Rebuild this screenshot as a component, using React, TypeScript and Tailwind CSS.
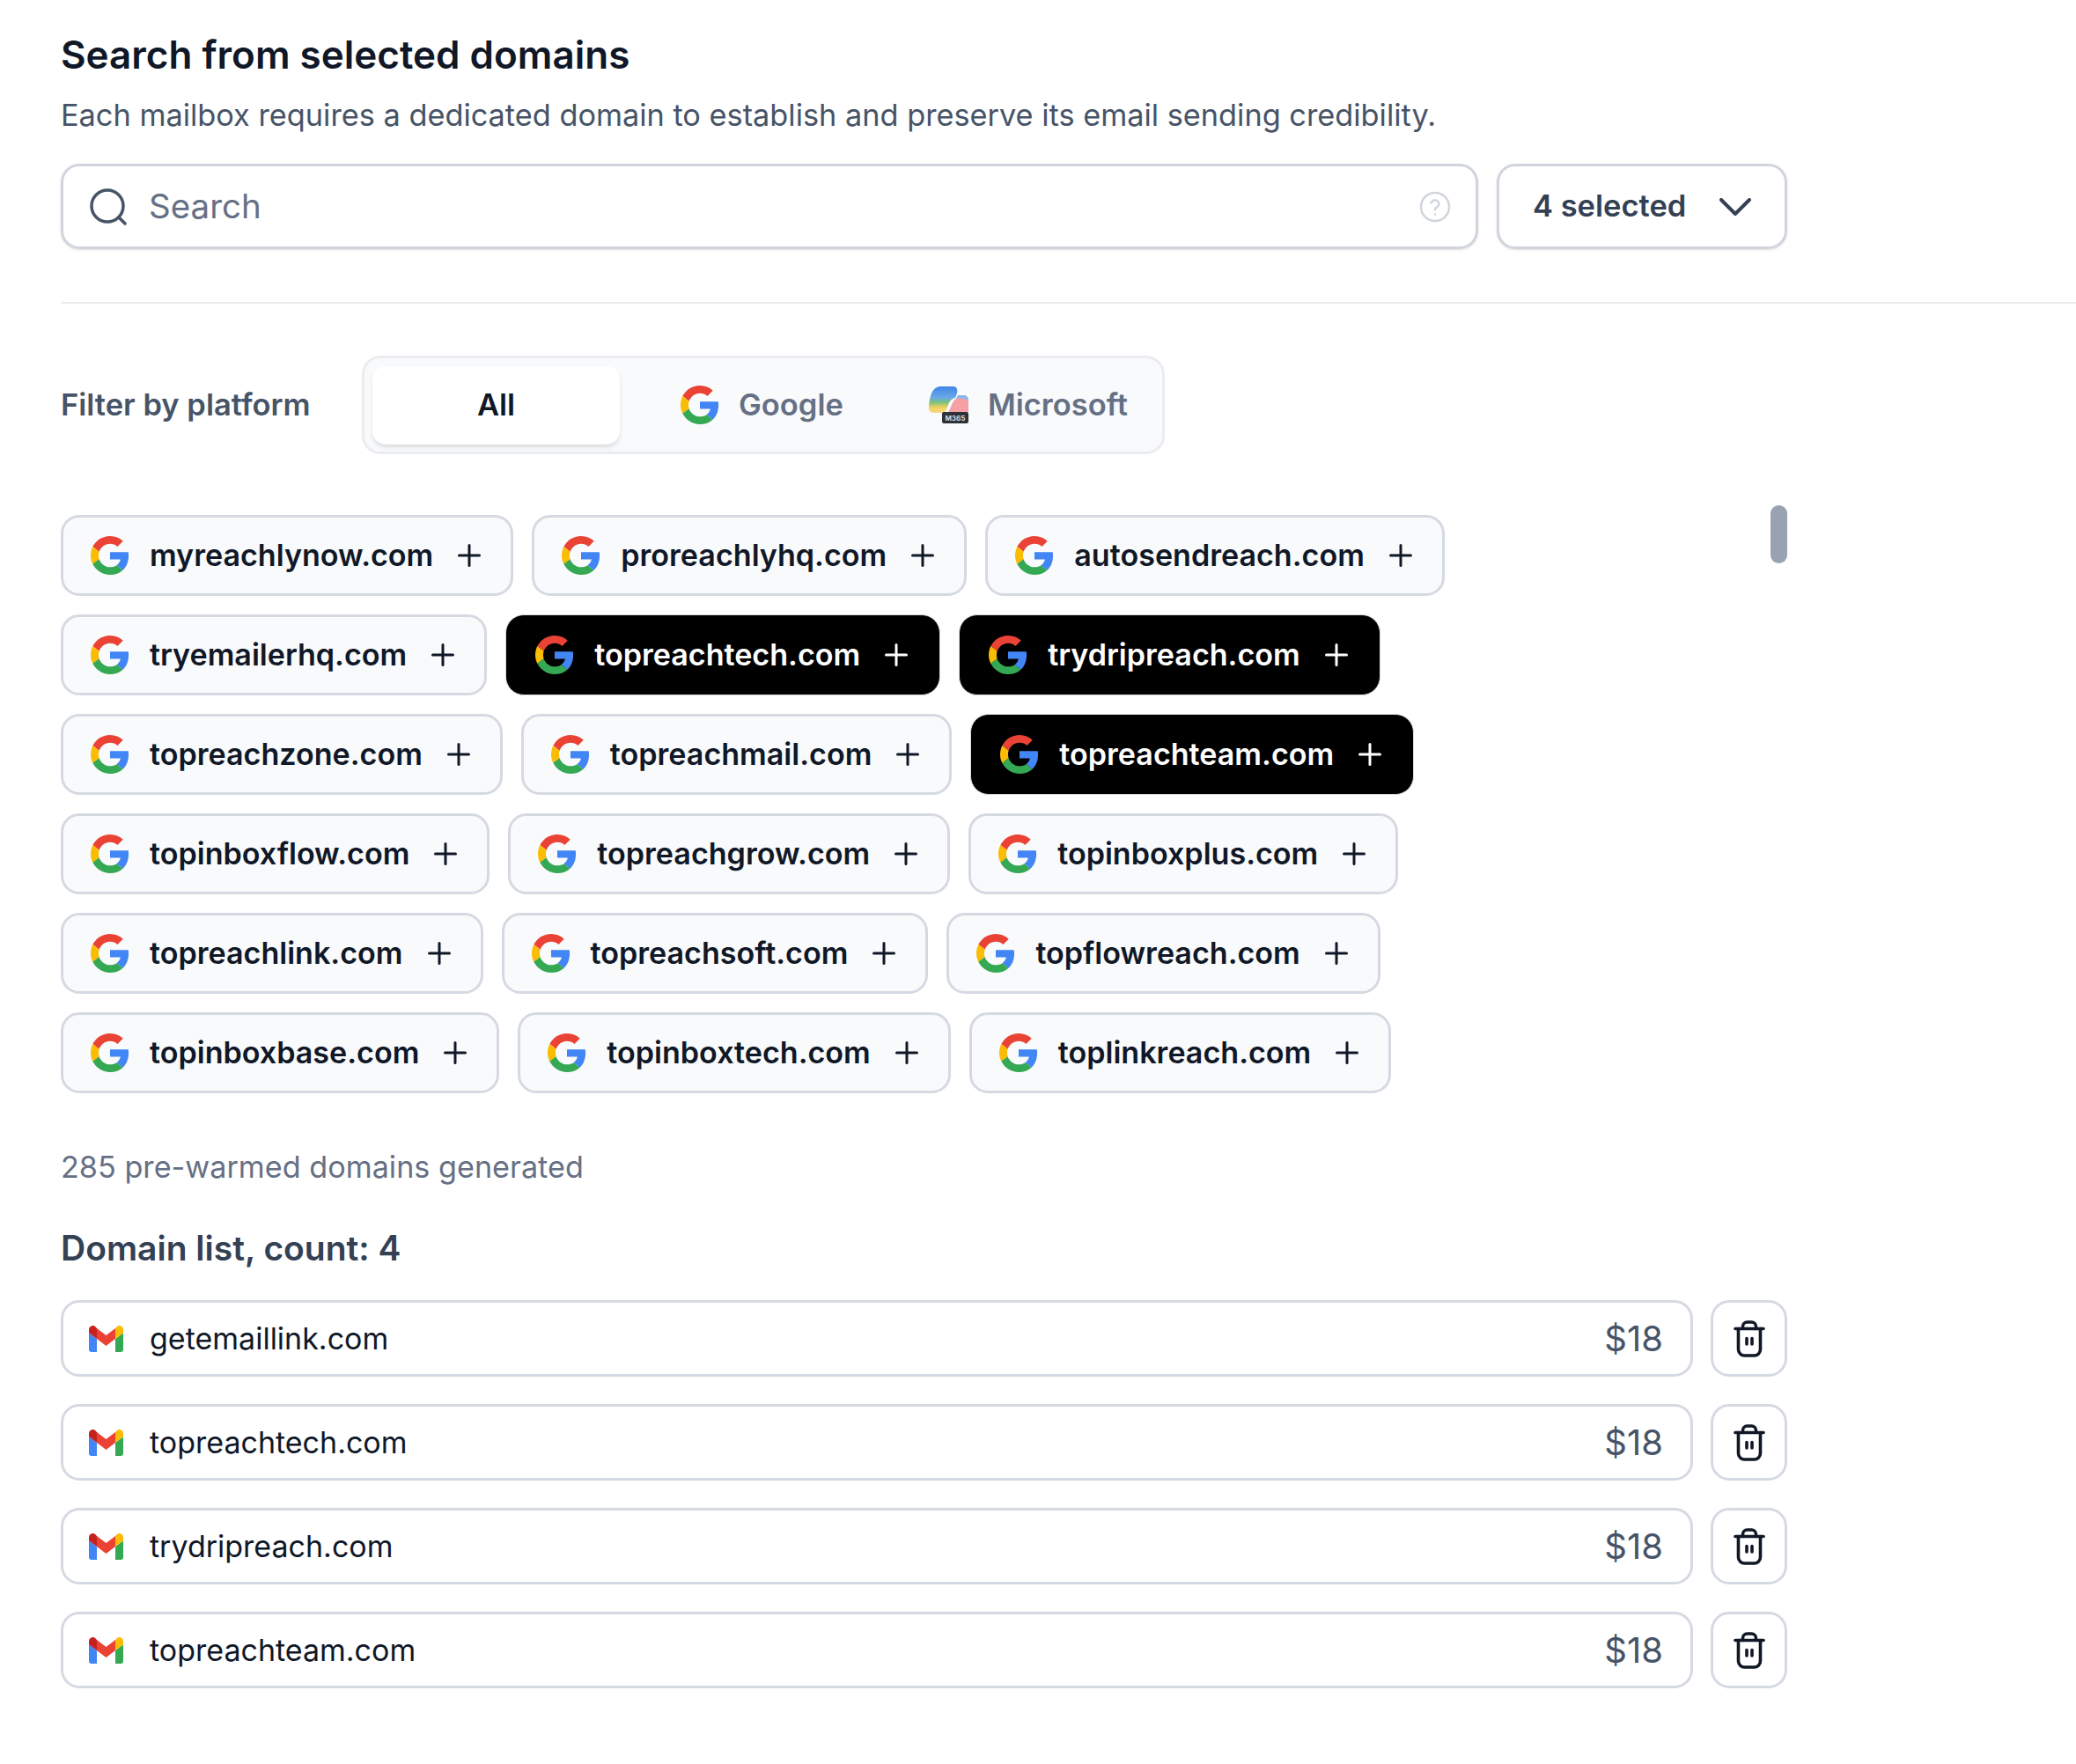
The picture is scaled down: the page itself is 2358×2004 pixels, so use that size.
const rows = [
  [
    { name: "myreachlynow.com" },
    { name: "proreachlyhq.com" },
    { name: "autosendreach.com" },
  ],
  [
    { name: "tryemailerhq.com" },
    { name: "topreachtech.com", selected: true },
    { name: "trydripreach.com", selected: true },
  ],
  [
    { name: "topreachzone.com" },
    { name: "topreachmail.com" },
    { name: "topreachteam.com", selected: true },
  ],
  [
    { name: "topinboxflow.com" },
    { name: "topreachgrow.com" },
    { name: "topinboxplus.com" },
  ],
  [
    { name: "topreachlink.com" },
    { name: "topreachsoft.com" },
    { name: "topflowreach.com" },
  ],
  [
    { name: "topinboxbase.com" },
    { name: "topinboxtech.com" },
    { name: "toplinkreach.com" },
  ],
];

const picked = ["getemaillink.com", "topreachtech.com", "trydripreach.com", "topreachteam.com"];

const GoogleIcon = ({ className }: { className?: string }) => (
  <svg viewBox="0 0 48 48" className={className}>
    <path fill="#EA4335" d="M24 9.5c3.54 0 6.71 1.22 9.21 3.6l6.85-6.85C35.9 2.38 30.47 0 24 0 14.62 0 6.51 5.38 2.56 13.22l7.98 6.19C12.43 13.72 17.74 9.5 24 9.5z" />
    <path fill="#4285F4" d="M46.98 24.55c0-1.57-.15-3.09-.38-4.55H24v9.02h12.94c-.58 2.96-2.26 5.48-4.78 7.18l7.73 6c4.51-4.18 7.09-10.36 7.09-17.65z" />
    <path fill="#FBBC05" d="M10.53 28.59c-.48-1.45-.76-2.99-.76-4.59s.27-3.14.76-4.59l-7.98-6.19C.92 16.46 0 20.12 0 24c0 3.88.92 7.54 2.56 10.78l7.97-6.19z" />
    <path fill="#34A853" d="M24 48c6.48 0 11.93-2.13 15.89-5.81l-7.73-6c-2.15 1.45-4.92 2.3-8.16 2.3-6.26 0-11.57-4.22-13.47-9.91l-7.98 6.19C6.51 42.62 14.62 48 24 48z" />
  </svg>
);

const GmailIcon = () => (
  <svg viewBox="0 0 52 40" className="h-[30px] w-[39px] shrink-0">
    <path fill="#4285F4" d="M4 40h8V20L0 11v25a4 4 0 0 0 4 4z" />
    <path fill="#34A853" d="M40 40h8a4 4 0 0 0 4-4V11L40 20z" />
    <path fill="#FBBC05" d="M40 4v16l12-9V6c0-5-5.5-7.800-9.500-4.800z" />
    <path fill="#EA4335" d="M12 20V4l14 10.500L40 4v16L26 30.500z" />
    <path fill="#C5221F" d="M0 6v5l12 9V4L9.500 1.200C5.500-1.800 0 1 0 6z" />
  </svg>
);

const M365Icon = () => (
  <div className="relative h-[42px] w-[45px] shrink-0">
    <svg viewBox="0 0 45 42" className="h-[42px] w-[45px]">
      <defs>
        <linearGradient id="m365-left" x1="0" y1="0" x2="0" y2="1">
          <stop offset="0" stopColor="#3f86e6" />
          <stop offset="0.42" stopColor="#6aa8e8" />
          <stop offset="0.6" stopColor="#79c27c" />
          <stop offset="0.8" stopColor="#f2d15f" />
          <stop offset="1" stopColor="#f6d98a" />
        </linearGradient>
      </defs>
      <path fill="url(#m365-left)" d="M0 24C1 10 4 0 14 0h14c4 0 5 4 4 8l-2 5c-4 1-6 3-8 8l-4 9H6c-4 0-6-2-6-6z" />
      <path fill="#f4a0a4" d="M33 13l3-3h4c3 0 5 3 5 7v10c0 3-2 3-3 3H22l4-9c2-5 4-7 7-8z" />
      <path fill="#8eb4ee" d="M33 10h7c3 0 5 3 5 6-4-2-9-3-14-2z" />
    </svg>
    <div className="absolute bottom-0 right-0 flex h-[13px] w-[30px] items-center justify-center rounded-[2px] bg-[#2d3138] text-[8px] font-bold leading-none text-[#d7dade]">
      M365
    </div>
  </div>
);

const PlusIcon = ({ color }: { color: string }) => (
  <svg viewBox="0 0 26 26" className="h-[26px] w-[26px] shrink-0" fill="none" stroke={color} strokeWidth="3" strokeLinecap="round">
    <path d="M13 1.500v23M1.500 13h23" />
  </svg>
);

const TrashIcon = () => (
  <svg viewBox="0 0 36 42" className="h-[42px] w-[36px]" fill="none" stroke="#101828" strokeWidth="3.600" strokeLinecap="round" strokeLinejoin="round">
    <path d="M2 9.500h32" />
    <path d="M10.500 9.500V7a5 5 0 0 1 5-5h5a5 5 0 0 1 5 5v2.500" />
    <path d="M5.500 9.500V33a7 7 0 0 0 7 7h11a7 7 0 0 0 7-7V9.500" />
    <path d="M15 20.500v6.500M21 20.500v6.500" />
  </svg>
);

const Chip = ({ name, selected }: { name: string; selected?: boolean }) => (
  <div
    className={
      selected
        ? "flex h-[92px] items-center gap-[23px] rounded-[21px] border border-[#d5d9e2] bg-black pl-[33px] pr-[36px] text-white"
        : "flex h-[92px] items-center gap-[23px] rounded-[21px] border-[3px] border-[#d5d9e2] bg-[#f9fafb] pl-[31px] pr-[34px] text-[#101828]"
    }
  >
    <GoogleIcon className="h-[44px] w-[44px] shrink-0" />
    <span className="text-[34.1px] font-semibold leading-none">{name}</span>
    <div className="ml-[5px]">
      <PlusIcon color={selected ? "#ffffff" : "#101828"} />
    </div>
  </div>
);

export default function App() {
  return (
    <div className="min-h-screen w-full bg-white pt-[37px] font-['Inter',sans-serif]">
      <div className="pl-[69px]">
        <h1 className="text-[44px] font-semibold leading-[50px] text-[#101828]">Search from selected domains</h1>
        <p className="mt-[22px] text-[34.3px] leading-[44px] text-[#475467]">
          Each mailbox requires a dedicated domain to establish and preserve its email sending credibility.
        </p>
        <div className="mt-[33px] flex w-[1961px] gap-[21px]">
          <div className="flex h-[97px] flex-1 items-center rounded-[21px] border-[3px] border-[#d0d5dd] pl-[30px] pr-[28px] shadow-sm">
            <svg viewBox="0 0 42 42" className="h-[42px] w-[42px] shrink-0" fill="none" stroke="#475467" strokeWidth="3.500" strokeLinecap="round">
              <circle cx="20" cy="20" r="18" />
              <path d="M33 33l7 7" />
            </svg>
            <span className="ml-[25px] flex-1 text-[38.5px] leading-none text-[#667085]">Search</span>
            <svg viewBox="0 0 36 36" className="h-[36px] w-[36px]" fill="none" stroke="#d0d5dd" strokeWidth="2.500" strokeLinecap="round">
              <circle cx="18" cy="18" r="16" />
              <path d="M13.500 13.500a4.600 4.600 0 0 1 8.900 1.500c0 3-4.400 3.600-4.400 6" />
              <path d="M18 26.500h.02" />
            </svg>
          </div>
          <div className="flex h-[97px] w-[330px] items-center rounded-[21px] border-[3px] border-[#d0d5dd] pl-[38px] shadow-sm">
            <span className="text-[34.5px] font-semibold leading-none text-[#344054]">4 selected</span>
            <svg viewBox="0 0 36 20" className="ml-[38px] h-[20px] w-[36px]" fill="none" stroke="#344054" strokeWidth="4" strokeLinecap="round" strokeLinejoin="round">
              <path d="M2 2l16 16L34 2" />
            </svg>
          </div>
        </div>
      </div>

      <div className="ml-[69px] mt-[60px] h-[2px] bg-[#eaecf0]" />

      <div className="mt-[59px] flex items-center pl-[69px]">
        <span className="w-[342px] text-[34.5px] font-semibold leading-none text-[#475467]">Filter by platform</span>
        <div className="flex h-[112px] w-[912px] items-center rounded-[21px] border-[3px] border-[#eaecf0] bg-[#f9fafb] pl-[9px]">
          <div className="flex h-[89px] w-[281px] items-center justify-center rounded-[15px] bg-white text-[34.5px] font-semibold text-[#101828] shadow-md">
            All
          </div>
          <GoogleIcon className="ml-[69px] h-[44px] w-[44px] shrink-0" />
          <span className="ml-[22px] text-[34.5px] font-semibold leading-none text-[#667085]">Google</span>
          <div className="ml-[97px]">
            <M365Icon />
          </div>
          <span className="ml-[22px] text-[34.5px] font-semibold leading-none text-[#667085]">Microsoft</span>
        </div>
      </div>

      <div className="relative ml-[69px] mt-[69px] flex w-[1961px] flex-col gap-[21px]">
        <div className="absolute -top-[11px] right-0 h-[66px] w-[19px] rounded-full bg-[#98a2b3]" />
        {rows.map((row, i) => (
          <div key={i} className="flex gap-[21px]">
            {row.map((chip) => (
              <Chip key={chip.name} name={chip.name} selected={chip.selected} />
            ))}
          </div>
        ))}
      </div>

      <div className="pl-[69px]">
        <p className="mt-[62px] text-[34.2px] leading-[44px] text-[#667085]">285 pre-warmed domains generated</p>
        <h2 className="mt-[48px] text-[39px] font-semibold leading-[44px] text-[#344054]">Domain list, count: 4</h2>
        <div className="mt-[37px] flex w-[1961px] flex-col gap-[31px]">
          {picked.map((name) => (
            <div key={name} className="flex gap-[20px]">
              <div className="flex h-[87px] flex-1 items-center rounded-[21px] border-[3px] border-[#d5d9e2] pl-[29px] pr-[31px]">
                <GmailIcon />
                <span className="ml-[30px] flex-1 text-[34px] leading-none text-[#101828]">{name}</span>
                <span className="text-[40px] leading-none text-[#475467]">$18</span>
              </div>
              <div className="flex h-[87px] w-[87px] items-center justify-center rounded-[21px] border-[3px] border-[#d5d9e2]">
                <TrashIcon />
              </div>
            </div>
          ))}
        </div>
      </div>
    </div>
  );
}
